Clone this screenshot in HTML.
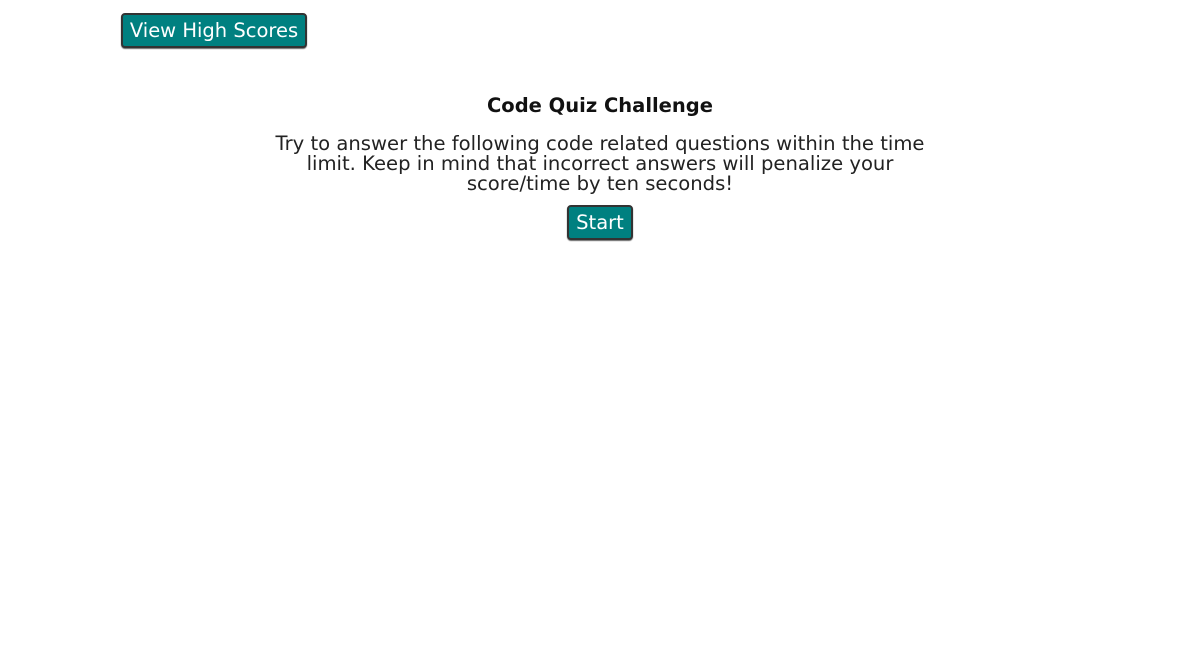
<!DOCTYPE html>
<html><head><style>
body{margin:0;background:#fff;font-family:"DejaVu Sans",Verdana,sans-serif;color:#111;width:1200px;height:660px;position:relative;overflow:hidden}
.btn{position:absolute;background:#008080;color:#fff;border:2px solid #333;border-radius:4px;box-sizing:border-box;font-size:19.5px;display:flex;align-items:center;justify-content:center;box-shadow:0 1px 1px #666}
h1{position:absolute;top:94px;left:0;width:1200px;text-align:center;margin:0;font-size:19.5px;font-weight:bold;line-height:24px}
p{position:absolute;top:134px;left:0;width:1200px;margin:0;text-align:center;font-size:19.6px;line-height:20px;color:#222;white-space:nowrap}
</style></head><body>
<div class="btn" style="left:121px;top:13px;width:186px;height:35px">View High Scores</div>
<h1>Code Quiz Challenge</h1>
<p>Try to answer the following code related questions within the time<br>limit. Keep in mind that incorrect answers will penalize your<br>score/time by ten seconds!</p>
<div class="btn" style="left:567px;top:205px;width:66px;height:35px">Start</div>
</body></html>
